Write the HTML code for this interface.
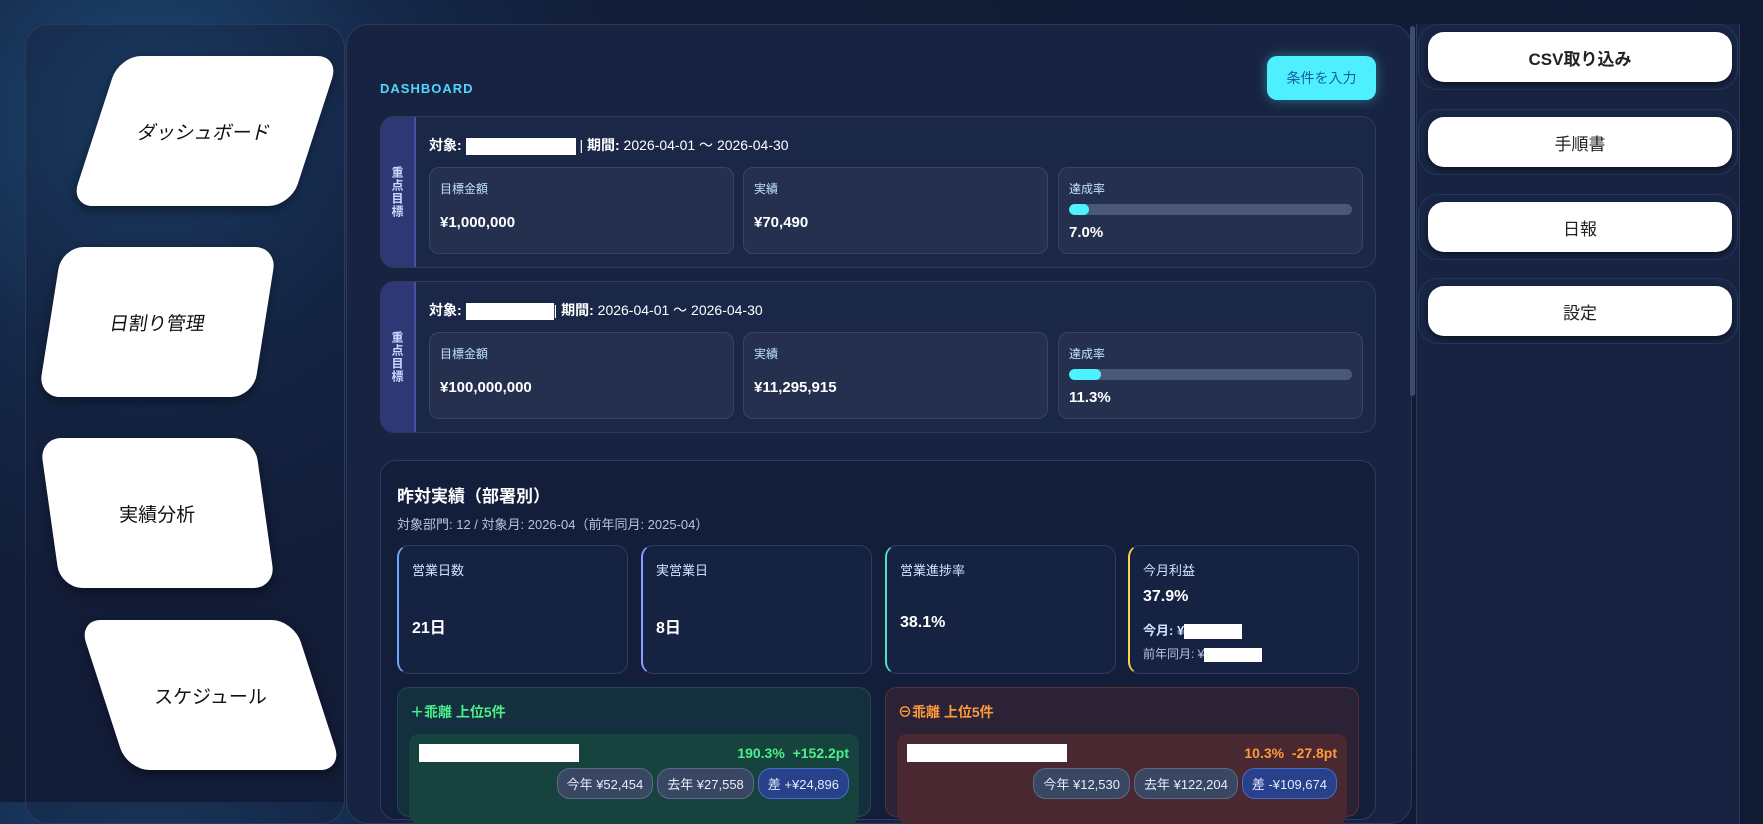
<!DOCTYPE html>
<html><head><meta charset="utf-8"><style>
*{box-sizing:border-box;margin:0;padding:0}
body{width:1763px;height:802px;overflow:hidden;font-family:"Liberation Sans","Noto Sans CJK JP",sans-serif;color:#e8eefc;
background:radial-gradient(circle at 150px 120px,#1d4a74 0,#15294a 250px,#111c36 500px,#111a33 100%);position:relative}
.abs{position:absolute}
.lp{left:25px;top:24px;width:320px;height:800px;border:1px solid #2a3a5a;border-radius:24px;background:rgba(20,30,58,.35)}
.nav{position:absolute;background:#fff;border-radius:22px;color:#111;font-size:19px;display:flex;align-items:center;justify-content:center;box-shadow:0 4px 10px rgba(0,0,0,.4)}
.mp{left:346px;top:24px;width:1066px;height:800px;border:1px solid #2a3a5a;border-radius:22px;background:#172341}
.sb{left:1410px;top:26px;width:5px;height:370px;background:#3d4c6a;border-radius:3px}
.rp{left:1416px;top:24px;width:324px;height:800px;border-left:1px solid #2a3a5a;border-right:1px solid #2a3a5a;background:#172341}
.rb{position:absolute;left:1418px;width:320px;height:66px;border:1px solid #25365a;border-radius:20px;background:#182544}
.rb div{position:absolute;left:9px;top:7px;width:304px;height:50px;background:#fff;border-radius:16px;color:#222;font-size:17px;display:flex;align-items:center;justify-content:center;box-shadow:0 3px 6px rgba(0,0,0,.5)}
.card{position:absolute;left:380px;width:996px;height:152px;border:1px solid #2c3b5e;border-radius:14px;background:#1a2747;overflow:hidden}
.band{position:absolute;left:0;top:0;bottom:0;width:35px;background:#2e3875;border-right:2px solid #4a4fa0;color:#cfd6ff;font-size:12px;font-weight:bold;display:flex;align-items:center;justify-content:center;writing-mode:vertical-rl;letter-spacing:1px}
.hd{position:absolute;left:48px;top:18px;font-size:14px;color:#fff}
.hd b{color:#fff}
.box{position:absolute;top:50px;width:305px;height:87px;border:1px solid #36446a;border-radius:10px;background:#25304f}
.box .l{position:absolute;left:10px;top:12px;font-size:12px;color:#bfe2ff}
.box .v{position:absolute;left:10px;top:46px;font-size:15px;font-weight:bold;color:#fff}
.bar{position:absolute;left:10px;top:36px;width:283px;height:11px;background:#4a5877;border-radius:6px;overflow:hidden}
.bar i{display:block;height:100%;background:#4ef2ff;border-radius:6px}
.wr{display:inline-block;background:#fff;height:17px;vertical-align:middle}
.sec{left:380px;top:460px;width:996px;height:360px;border:1px solid #2c3b5e;border-radius:16px;background:#131e3b}
.st{position:absolute;top:545px;width:231px;height:129px;border:1px solid #2c3b5e;border-radius:12px;background:#162242}
.st .l{position:absolute;left:13px;top:14px;font-size:13px;color:#cfe3ff}
.st .v{position:absolute;left:13px;top:68px;font-size:16px;font-weight:bold;color:#fff}
.pn{position:absolute;top:687px;width:474px;height:130px;border-radius:12px}
.pill{display:inline-block;border-radius:13px;padding:5px 9px;font-size:13px;border:1px solid #5b6a8a;background:#3a4762;color:#e5ecff;margin-left:4px}
</style></head><body>
<div class="abs lp"></div>
<div class="nav" style="left:95px;top:56px;width:220px;height:150px;transform:skewX(-18deg)"><span style="transform:skewX(5deg)">ダッシュボード</span></div>
<div class="nav" style="left:50px;top:247px;width:215px;height:150px;transform:skewX(-9deg)">日割り管理</div>
<div class="nav" style="left:50px;top:438px;width:215px;height:150px;transform:skewX(8deg)"><span style="transform:skewX(-8deg)">実績分析</span></div>
<div class="nav" style="left:103px;top:620px;width:215px;height:150px;transform:skewX(18deg)"><span style="transform:skewX(-18deg)">スケジュール</span></div>

<div class="abs mp"></div>
<div class="abs sb"></div>
<div class="abs rp"></div>
<div class="rb" style="top:24px"><div style="font-weight:bold">CSV取り込み</div></div>
<div class="rb" style="top:109px"><div>手順書</div></div>
<div class="rb" style="top:194px"><div>日報</div></div>
<div class="rb" style="top:278px"><div>設定</div></div>

<div class="abs" style="left:380px;top:81px;font-size:13px;font-weight:bold;color:#4fd8ff;letter-spacing:1px">DASHBOARD</div>
<div class="abs" style="left:1267px;top:56px;width:109px;height:44px;background:#4ef0ff;border-radius:10px;color:#1560a0;font-size:14px;display:flex;align-items:center;justify-content:center;box-shadow:0 0 12px rgba(78,240,255,.4)">条件を入力</div>

<div class="card" style="top:116px"><div class="band">重点目標</div>
<div class="hd"><b>対象:</b> <span class="wr" style="width:110px"></span> | <b>期間:</b> 2026-04-01 〜 2026-04-30</div>
<div class="box" style="left:48px"><div class="l">目標金額</div><div class="v">¥1,000,000</div></div>
<div class="box" style="left:362px"><div class="l">実績</div><div class="v">¥70,490</div></div>
<div class="box" style="left:677px"><div class="l">達成率</div><div class="bar"><i style="width:7%"></i></div><div class="v" style="top:56px">7.0%</div></div>
</div>
<div class="card" style="top:281px"><div class="band">重点目標</div>
<div class="hd"><b>対象:</b> <span class="wr" style="width:88px"></span>| <b>期間:</b> 2026-04-01 〜 2026-04-30</div>
<div class="box" style="left:48px"><div class="l">目標金額</div><div class="v">¥100,000,000</div></div>
<div class="box" style="left:362px"><div class="l">実績</div><div class="v">¥11,295,915</div></div>
<div class="box" style="left:677px"><div class="l">達成率</div><div class="bar"><i style="width:11.3%"></i></div><div class="v" style="top:56px">11.3%</div></div>
</div>

<div class="abs sec"></div>
<div class="abs" style="left:397px;top:482px;font-size:17px;font-weight:bold;color:#fff">昨対実績（部署別）</div>
<div class="abs" style="left:397px;top:514px;font-size:13px;color:#b8c4dc">対象部門: 12 / 対象月: 2026-04（前年同月: 2025-04）</div>
<div class="st" style="left:397px;border-left:2px solid #6aa8ff"><div class="l">営業日数</div><div class="v">21日</div></div>
<div class="st" style="left:641px;border-left:2px solid #8a9cff"><div class="l">実営業日</div><div class="v">8日</div></div>
<div class="st" style="left:885px;border-left:2px solid #4fe0c0"><div class="l">営業進捗率</div><div class="v">38.1%</div></div>
<div class="st" style="left:1128px;border-left:2px solid #ffd04a"><div class="l">今月利益</div><div class="v" style="top:42px">37.9%</div>
<div style="position:absolute;left:13px;top:74px;font-size:13px;font-weight:bold;color:#cfe3ff">今月: ¥<span class="wr" style="width:58px;height:15px"></span></div>
<div style="position:absolute;left:13px;top:99px;font-size:12px;color:#b8c4dc">前年同月: ¥<span class="wr" style="width:58px;height:14px"></span></div></div>

<div class="pn" style="left:397px;background:#14303f;border:1px solid #1f4a50">
<div style="position:absolute;left:12px;top:14px;font-size:14px;font-weight:bold;color:#4cf08a">＋乖離 上位5件</div>
<div style="position:absolute;left:11px;top:46px;width:450px;height:90px;background:#17433f;border-radius:10px">
<span class="wr" style="position:absolute;left:10px;top:10px;width:160px;height:18px"></span>
<div style="position:absolute;right:10px;top:11px;font-size:14px;font-weight:bold;color:#4cf08a">190.3% &nbsp;+152.2pt</div>
<div style="position:absolute;right:10px;top:34px"><span class="pill">今年 ¥52,454</span><span class="pill">去年 ¥27,558</span><span class="pill" style="background:#27418a;border-color:#4a68c8">差 +¥24,896</span></div></div></div>

<div class="pn" style="left:885px;background:#2c2236;border:1px solid #5a3036">
<div style="position:absolute;left:12px;top:14px;font-size:14px;font-weight:bold;color:#ff9a3c">⊖乖離 上位5件</div>
<div style="position:absolute;left:11px;top:46px;width:450px;height:90px;background:#4a2832;border-radius:10px">
<span class="wr" style="position:absolute;left:10px;top:10px;width:160px;height:18px"></span>
<div style="position:absolute;right:10px;top:11px;font-size:14px;font-weight:bold;color:#ff9a3c">10.3% &nbsp;-27.8pt</div>
<div style="position:absolute;right:10px;top:34px"><span class="pill">今年 ¥12,530</span><span class="pill">去年 ¥122,204</span><span class="pill" style="background:#27418a;border-color:#4a68c8">差 -¥109,674</span></div></div></div>
</body></html>
